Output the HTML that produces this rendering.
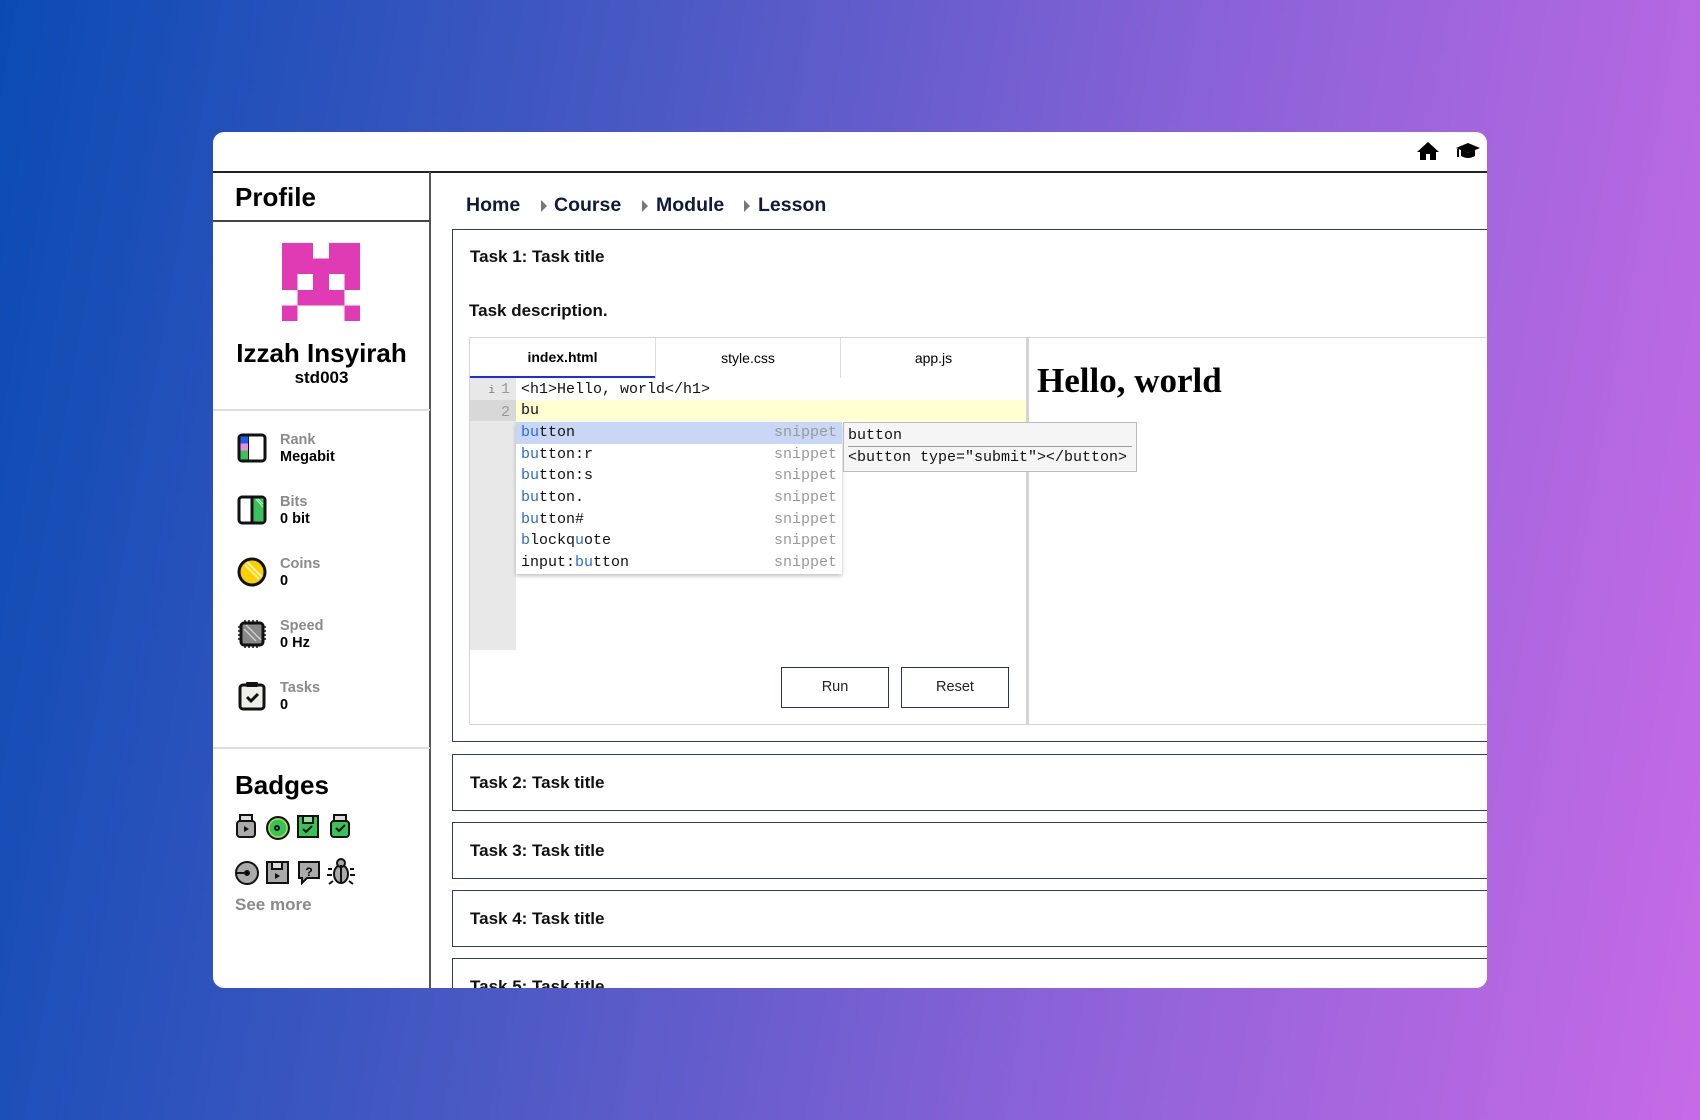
<!DOCTYPE html>
<html><head><meta charset="utf-8"><style>
*{box-sizing:border-box;margin:0;padding:0}
body{width:1700px;height:1120px;overflow:hidden;background:linear-gradient(100deg,#0a4bb3 0%,#4a59c4 35%,#8b62d8 65%,#c76ae6 100%);font-family:"Liberation Sans",sans-serif;position:relative}
.card{position:absolute;left:213px;top:132px;width:1274px;height:856px;background:#fff;border-radius:11px;overflow:hidden}
.a{position:absolute}
.b{font-weight:bold}
.mono{font-family:"Liberation Mono",monospace}
.task{position:absolute;left:239px;width:1100px;height:57px;border:1.5px solid #333d4f;background:#fff}
.task span{position:absolute;left:17px;top:18px;font-size:17px;font-weight:bold;color:#111}
.stat{position:absolute;left:67px;font-size:14.5px;font-weight:bold;line-height:17px}
.stat .l{color:#8a8a8a}
.ac div{height:21.7px;line-height:21.7px;padding-left:5px;position:relative}
.ac em{font-style:normal;color:#2a6bd6}
.ac i{font-style:normal;position:absolute;right:5px;color:#999}
.btn{position:absolute;width:108px;height:41px;border:1.5px solid #2b3445;font-size:14.5px;text-align:center;line-height:38px;color:#222}
</style></head><body>
<div class="card">
 <svg class="a" style="left:1203px;top:8px" width="24" height="22" viewBox="0 0 24 22"><path d="M12 2 L1 12 H4 V20 H10 V14 H14 V20 H20 V12 H23 Z" fill="#000"/></svg>
 <svg class="a" style="left:1242px;top:8px" width="26" height="22" viewBox="0 0 26 22"><path d="M13 3 L1 8 L13 13 L25 8 Z" fill="#000"/><path d="M6 10 V16 Q13 20 20 16 V10 L13 13 Z" fill="#000"/><path d="M3 9 V17" stroke="#000" stroke-width="2"/></svg>
 <div class="a" style="left:0;top:39px;width:1274px;height:2px;background:#222"></div>
 <div class="a" style="left:216px;top:40px;width:2px;height:820px;background:#555"></div>
 <div class="a b" style="left:22px;top:50px;font-size:26px;color:#000">Profile</div>
 <div class="a" style="left:0;top:88px;width:217px;height:2px;background:#444"></div>
 <svg class="a" style="left:69px;top:111px" width="78" height="78" viewBox="0 0 5 5" shape-rendering="crispEdges" fill="#e03bb5">
  <rect x="0" y="0" width="2" height="1"/><rect x="3" y="0" width="2" height="1"/>
  <rect x="0" y="1" width="5" height="1"/>
  <rect x="0" y="2" width="1" height="1"/><rect x="2" y="2" width="1" height="1"/><rect x="4" y="2" width="1" height="1"/>
  <rect x="1" y="3" width="3" height="1"/>
  <rect x="0" y="4" width="1" height="1"/><rect x="4" y="4" width="1" height="1"/>
 </svg>
 <div class="a b" style="left:0;width:217px;text-align:center;top:206px;font-size:26px;color:#000">Izzah Insyirah</div>
 <div class="a b" style="left:0;width:217px;text-align:center;top:236px;font-size:17px;color:#000">std003</div>
 <div class="a" style="left:0;top:277px;width:217px;height:2px;background:#ddd"></div>

 <svg class="a" style="left:23px;top:300px" width="32" height="32" viewBox="0 0 32 32"><rect x="3" y="3" width="26" height="26" rx="3" fill="#fff" stroke="#111" stroke-width="3"/><rect x="4.5" y="4.5" width="8" height="7" fill="#1e5cf0"/><rect x="4.5" y="11.5" width="8" height="7" fill="#f08ae0"/><rect x="4.5" y="18.5" width="8" height="9" fill="#39c25a"/><path d="M12.5 4v24" stroke="#111" stroke-width="1"/></svg>
 <div class="stat" style="top:300px"><div class="l">Rank</div><div>Megabit</div></div>
 <svg class="a" style="left:23px;top:362px" width="32" height="32" viewBox="0 0 32 32"><rect x="3" y="3" width="26" height="26" rx="3" fill="#fff" stroke="#111" stroke-width="3"/><rect x="16" y="4.5" width="11.5" height="23" fill="#39c25a"/><path d="M16 3v26" stroke="#111" stroke-width="3"/><path d="M20 5l7 8M22 5l5 5" stroke="#bdf0c8" stroke-width="1.2"/></svg>
 <div class="stat" style="top:362px"><div class="l">Bits</div><div>0 bit</div></div>
 <svg class="a" style="left:23px;top:424px" width="32" height="32" viewBox="0 0 32 32"><circle cx="16" cy="16" r="13" fill="#fcd000" stroke="#111" stroke-width="3"/><path d="M11 6l15 15M9 9l14 14" stroke="#fff3a8" stroke-width="2"/></svg>
 <div class="stat" style="top:424px"><div class="l">Coins</div><div>0</div></div>
 <svg class="a" style="left:23px;top:486px" width="32" height="32" viewBox="0 0 32 32"><rect x="5" y="5" width="22" height="22" rx="3" fill="#888" stroke="#111" stroke-width="3"/><path d="M9 2v3M13 2v3M17 2v3M21 2v3M9 27v3M13 27v3M17 27v3M21 27v3M2 9h3M2 13h3M2 17h3M2 21h3M27 9h3M27 13h3M27 17h3M27 21h3" stroke="#111" stroke-width="1.5"/><path d="M10 7l15 15M8 11l12 12" stroke="#ccc" stroke-width="1.5"/></svg>
 <div class="stat" style="top:486px"><div class="l">Speed</div><div>0 Hz</div></div>
 <svg class="a" style="left:23px;top:548px" width="32" height="32" viewBox="0 0 32 32"><rect x="4" y="5" width="24" height="24" rx="3" fill="#eeeee8" stroke="#111" stroke-width="3"/><rect x="10" y="2" width="12" height="5" rx="1" fill="#111"/><path d="M11 17l4 4 7-7" stroke="#111" stroke-width="3" fill="none"/></svg>
 <div class="stat" style="top:548px"><div class="l">Tasks</div><div>0</div></div>

 <div class="a" style="left:0;top:615px;width:217px;height:2px;background:#ddd"></div>
 <div class="a b" style="left:22px;top:638px;font-size:26px;color:#000">Badges</div>
 <svg class="a" style="left:22px;top:681px" width="140" height="80" viewBox="0 0 140 80">
  <g stroke="#111" stroke-width="2">
   <rect x="5" y="2" width="12" height="7" fill="#ddd"/><rect x="2" y="8" width="18" height="16" rx="3" fill="#aaa"/><path d="M9 13l5 3-5 3z" fill="#111" stroke="none"/>
   <circle cx="43" cy="15" r="11" fill="#39c25a"/><circle cx="43" cy="15" r="9" fill="none" stroke="#e0e040" stroke-width="1"/><circle cx="42" cy="15" r="2" fill="none"/>
   <rect x="63" y="3" width="20" height="21" fill="#39c25a"/><rect x="68" y="3" width="10" height="7" fill="#8be39c"/><path d="M68 16l3 3 6-6" fill="none"/>
   <rect x="99" y="2" width="12" height="7" fill="#ddd"/><rect x="96" y="8" width="18" height="16" rx="3" fill="#39c25a"/><path d="M101 15l3 3 6-6" fill="none"/>
   <circle cx="12" cy="60" r="11" fill="#aaa"/><circle cx="12" cy="60" r="2"/><path d="M2 60h7" />
   <rect x="32" y="49" width="21" height="21" fill="#aaa"/><rect x="37" y="49" width="10" height="7" fill="#ddd"/><path d="M40 60l5 3-5 3z" fill="#111" stroke="none"/>
   <path d="M64 49h20v16h-12l-5 5v-5h-3z" fill="#aaa"/>
   <ellipse cx="106" cy="61" rx="7" ry="9" fill="#aaa"/><circle cx="106" cy="50" r="4" fill="#aaa"/><path d="M97 56h-4M115 56h4M97 62h-5M115 62h5M98 68l-4 3M114 68l4 3M106 52v18"/>
  </g>
  <text x="74" y="63" font-size="12" font-weight="bold" text-anchor="middle" font-family="Liberation Sans">?</text>
 </svg>
 <div class="a b" style="left:22px;top:763px;font-size:17px;color:#8a8a8a">See more</div>

 <div class="a b" style="top:62px;font-size:19.5px;color:#0f1b3d;left:253px">Home</div>
 <div class="a" style="top:68px;left:328px;width:0;height:0;border-left:6px solid #777;border-top:6px solid transparent;border-bottom:6px solid transparent"></div>
 <div class="a b" style="top:62px;font-size:19.5px;color:#0f1b3d;left:341px">Course</div>
 <div class="a" style="top:68px;left:429px;width:0;height:0;border-left:6px solid #777;border-top:6px solid transparent;border-bottom:6px solid transparent"></div>
 <div class="a b" style="top:62px;font-size:19.5px;color:#0f1b3d;left:443px">Module</div>
 <div class="a" style="top:68px;left:531px;width:0;height:0;border-left:6px solid #777;border-top:6px solid transparent;border-bottom:6px solid transparent"></div>
 <div class="a b" style="top:62px;font-size:19.5px;color:#0f1b3d;left:545px">Lesson</div>

 <div class="a" style="left:239px;top:97px;width:1100px;height:513px;border:1.5px solid #333d4f"></div>
 <div class="a b" style="left:257px;top:115px;font-size:17px;color:#111">Task 1: Task title</div>
 <div class="a b" style="left:256px;top:169px;font-size:17px;color:#111">Task description.</div>
 <div class="a" style="left:256px;top:205px;width:1100px;height:388px;border:1.5px solid #d4d4d4"></div>
 <div class="a" style="left:813px;top:205px;width:3px;height:388px;background:#d4d4d4"></div>
 <div class="a" style="left:257px;top:206px;width:185px;height:40px;border-bottom:2.5px solid #1a2cf0;text-align:center;line-height:38px;font-size:14px;font-weight:bold">index.html</div>
 <div class="a" style="left:442px;top:206px;width:185px;height:40px;border-left:1px solid #ddd;text-align:center;line-height:40px;font-size:14px">style.css</div>
 <div class="a" style="left:627px;top:206px;width:186px;height:40px;border-left:1px solid #ddd;text-align:center;line-height:40px;font-size:14px">app.js</div>
 <div class="a" style="left:257px;top:246px;width:46px;height:272px;background:#e8e8e8"></div>
 <div class="a" style="left:257px;top:268px;width:46px;height:21px;background:#d8d8d8"></div>
 <div class="a" style="left:303px;top:268px;width:510px;height:21px;background:#ffffd2"></div>
 <div class="a mono" style="left:257px;top:247px;width:40px;text-align:right;font-size:15px;line-height:21px;color:#999"><span style="font-size:11px;color:#777;margin-right:6px">i</span>1<br>2</div>
 <div class="a mono" style="left:308px;top:247px;font-size:15px;line-height:21px;color:#111">&lt;h1&gt;Hello, world&lt;/h1&gt;<br>bu</div>
 <div class="a mono ac" style="left:303px;top:290px;width:326px;background:#fff;box-shadow:0 2px 4px rgba(0,0,0,.25);font-size:15px;color:#111">
  <div style="background:#c9d6f5"><em>bu</em>tton<i>snippet</i></div>
  <div><em>bu</em>tton:r<i>snippet</i></div>
  <div><em>bu</em>tton:s<i>snippet</i></div>
  <div><em>bu</em>tton.<i>snippet</i></div>
  <div><em>bu</em>tton#<i>snippet</i></div>
  <div><em>b</em>lockq<em>u</em>ote<i>snippet</i></div>
  <div>input:<em>bu</em>tton<i>snippet</i></div>
 </div>
 <div class="a mono" style="left:630px;top:290px;width:294px;height:50px;background:#f5f5f5;border:1.5px solid #bbb;font-size:15px;color:#111;padding:3px 4px">
  <div style="border-bottom:1px solid #999;line-height:20px">button</div>
  <div style="line-height:22px">&lt;button type="submit"&gt;&lt;/button&gt;</div>
 </div>
 <div class="btn" style="left:568px;top:535px">Run</div>
 <div class="btn" style="left:688px;top:535px">Reset</div>
 <div class="a b" style="left:824px;top:229px;font-family:'Liberation Serif',serif;font-size:35px;color:#000">Hello, world</div>

 <div class="task" style="top:622px"><span>Task 2: Task title</span></div>
 <div class="task" style="top:690px"><span>Task 3: Task title</span></div>
 <div class="task" style="top:758px"><span>Task 4: Task title</span></div>
 <div class="task" style="top:826px"><span>Task 5: Task title</span></div>
</div>
</body></html>
